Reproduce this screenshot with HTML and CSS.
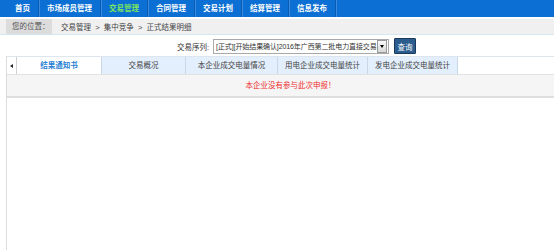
FILE: index.html
```html
<!DOCTYPE html>
<html>
    <head>
        <meta charset="utf-8">
        <link rel="stylesheet" href="styles.css">
    </head>
    <body class="page">
        <div class="nav">
            <a class="navitem">首页</a>
            <a class="navitem">市场成员管理</a>
            <a class="navitem active">交易管理</a>
            <a class="navitem">合同管理</a>
            <a class="navitem">交易计划</a>
            <a class="navitem">结算管理</a>
            <a class="navitem">信息发布</a>
        </div>
        <div class="crumbs">
            <span class="where">您的位置：</span>
            <span class="path">交易管理 &nbsp;&gt;&nbsp; 集中竞争 &nbsp;&gt;&nbsp; 正式结果明细</span>
        </div>
        <div class="query">
            <span class="qlabel">交易序列:</span>
            <div class="sel">
                <span class="seltext">[正式][开始结果确认]2016年广西第二批电力直接交易</span>
                <span class="selbtn"><span class="tri"></span></span>
            </div>
            <button type="button" class="go">查询</button>
        </div>
        <div class="panel">
            <div class="tabs">
                <div class="tab arrow"><span class="ltri"></span></div>
                <div class="tab current w1">结果通知书</div>
                <div class="tab w2">交易概况</div>
                <div class="tab w3">本企业成交电量情况</div>
                <div class="tab w4">用电企业成交电量统计</div>
                <div class="tab w4">发电企业成交电量统计</div>
            </div>
            <div class="notice">本企业没有参与此次申报！</div>
        </div>
    </body>
</html>
```

FILE: styles.css
```css
html{
    overflow: hidden;
}

.page{
    margin: 0;
    background-color: white;
    font-family: 'Liberation Sans', 'Noto Sans CJK SC', sans-serif;
    font-size: 7.5px;
    color: #333;
}

.nav{
    height: 17px;
    background-color: #0c6fd3;
    display: flex;
    padding-left: 7px;
    border-bottom: 2px solid white;
}

.navitem{
    color: white;
    font-weight: bold;
    line-height: 17px;
    padding: 0 8px;
    border-right: 1px solid #0a5cb2;
    box-shadow: 1px 0 0 #3c8be0;
    white-space: nowrap;
}

.active{
    color: #7ee65c;
}

.crumbs{
    height: 15px;
    background-color: #f0f0f0;
    border-bottom: 1px solid #d4e6ef;
    display: flex;
    align-items: center;
    padding-left: 6px;
}

.where{
    background-color: #dcdcdc;
    height: 15px;
    line-height: 15px;
    width: 40px;
    padding-left: 6px;
    color: #555;
}

.path{
    margin-left: 9px;
    color: #444;
}

.query{
    display: flex;
    align-items: center;
    justify-content: flex-start;
    padding-left: 177px;
    height: 20px;
    margin-top: 1px;
}

.qlabel{
    margin-right: 4px;
}

.sel{
    width: 174px;
    height: 13px;
    border: 1px solid #a9a9a9;
    display: flex;
    align-items: center;
    background-color: white;
}

.seltext{
    flex: 1;
    overflow: hidden;
    white-space: nowrap;
    padding-left: 2px;
    line-height: 13px;
    font-size: 7px;
    letter-spacing: -0.1px;
}

.selbtn{
    width: 8px;
    height: 11px;
    margin-right: 1px;
    border: 1px solid #999;
    background: linear-gradient(#fafafa, #d8d8d8);
    display: flex;
    align-items: center;
    justify-content: center;
}

.tri{
    border-left: 2px solid transparent;
    border-right: 2px solid transparent;
    border-top: 3px solid black;
}

.go{
    margin-left: 5px;
    width: 22px;
    height: 16px;
    padding: 0;
    border: 1px solid #17395c;
    border-radius: 1px;
    background-color: #2b5c8d;
    color: white;
    font-family: 'Liberation Sans', 'Noto Sans CJK SC', sans-serif;
    font-size: 7.5px;
}

.panel{
    margin-left: 6px;
    margin-right: -20px;
    border-left: 1px solid #dcdcdc;
    min-height: 200px;
}

.tabs{
    display: flex;
    height: 17px;
    border-top: 1px solid #dde6ee;
}

.tab{
    line-height: 17px;
    text-align: center;
    background-color: #e3effc;
    border-right: 1px solid #c9d7e6;
    color: #444;
    white-space: nowrap;
}

.arrow{
    width: 9px;
    background-color: white;
    border-right: 1px solid #d0d0d0;
    display: flex;
    align-items: center;
    justify-content: center;
}

.ltri{
    border-top: 2px solid transparent;
    border-bottom: 2px solid transparent;
    border-right: 3px solid #222;
}

.current{
    background-color: white;
    color: #2a7fd4;
    font-weight: bold;
}

.w1{
    width: 84px;
}

.w2{
    width: 83px;
}

.w3{
    width: 91px;
}

.w4{
    width: 89px;
}

.notice{
    height: 21px;
    line-height: 21px;
    background-color: #f5f5f5;
    border-top: 1px solid #e2e2e2;
    border-bottom: 2px solid #dedede;
    text-align: center;
    color: #f03030;
}
```
